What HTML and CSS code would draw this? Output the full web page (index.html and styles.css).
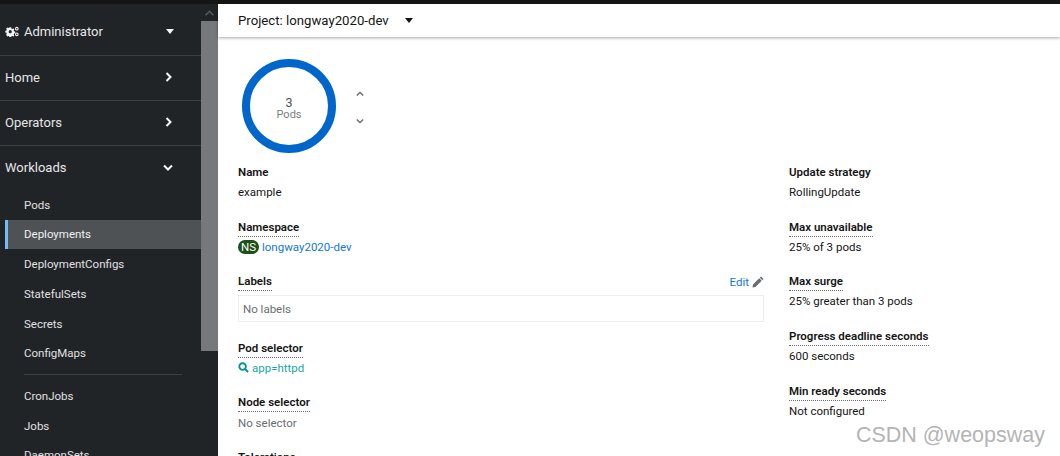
FILE: index.html
```html
<!DOCTYPE html>
<html lang="en">
<head>
<meta charset="utf-8">
<title>Deployment example</title>
<link rel="stylesheet" href="styles.css">
</head>
<body>
<div class="topline"></div>
<div class="app">
  <nav class="sidebar">
    <div class="nav-scroll">
      <div class="perspective">
        <svg class="cogs" viewBox="0 0 16 12" width="14" height="11"><path fill="#f0f0f0" d="M5 1.200h2l.3 1.300 1 .5 1.200-.6 1.200 1.300-.7 1.100.4 1 1.300.4v1.800l-1.300.3-.4 1 .7 1.200-1.200 1.200-1.200-.6-1 .4-.3 1.300H5l-.3-1.300-1-.4-1.200.6L1.300 9.600l.7-1.200-.4-1L.3 7.100V5.300l1.300-.4.4-1-.7-1.100 1.200-1.300 1.200.6 1-.5zM6 4.400a1.800 1.800 0 1 0 0 3.600 1.800 1.800 0 0 0 0-3.600z"/><circle cx="13.500" cy="2.800" r="1.500" fill="none" stroke="#f0f0f0" stroke-width="1.200"/><circle cx="13.500" cy="9.200" r="1.500" fill="none" stroke="#f0f0f0" stroke-width="1.200"/></svg>
        <span class="perspective-label">Administrator</span>
        <svg class="caret light" viewBox="0 0 8 5" width="8" height="5"><path d="M0 0h8L4 5z"/></svg>
      </div>
      <div class="section">
        <span>Home</span>
        <svg class="chev" viewBox="0 0 7 10" width="7" height="10"><path d="M1.500 1l4 4-4 4" fill="none" stroke="#f5f5f5" stroke-width="2"/></svg>
      </div>
      <div class="section">
        <span>Operators</span>
        <svg class="chev" viewBox="0 0 7 10" width="7" height="10"><path d="M1.500 1l4 4-4 4" fill="none" stroke="#f5f5f5" stroke-width="2"/></svg>
      </div>
      <div class="section open">
        <span>Workloads</span>
        <svg class="chev down" viewBox="0 0 10 7" width="10" height="7"><path d="M1 1.500l4 4 4-4" fill="none" stroke="#f5f5f5" stroke-width="2"/></svg>
      </div>
      <ul class="subnav">
        <li>Pods</li>
        <li class="active">Deployments</li>
        <li>DeploymentConfigs</li>
        <li>StatefulSets</li>
        <li>Secrets</li>
        <li>ConfigMaps</li>
        <li class="sep" aria-hidden="true"></li>
        <li>CronJobs</li>
        <li>Jobs</li>
        <li>DaemonSets</li>
      </ul>
    </div>
    <div class="scrollbar">
      <div class="scroll-btn"><svg viewBox="0 0 10 6" width="9" height="6"><path d="M5 0l5 5-1.200 1L5 2.400 1.200 6 0 5z" fill="#55585b"/></svg></div>
      <div class="scroll-thumb"></div>
    </div>
  </nav>
  <main class="main">
    <header class="projectbar">
      <span>Project: longway2020-dev</span>
      <svg class="caret" viewBox="0 0 8 5" width="8" height="5"><path d="M0 0h8L4 5z"/></svg>
    </header>
    <div class="content">
      <div class="pods">
        <div class="ring">
          <span class="ring-num">3</span>
          <span class="ring-label">Pods</span>
        </div>
        <div class="spin">
          <svg viewBox="0 0 10 7" width="8" height="6"><path d="M1 5.500l4-4 4 4" fill="none" stroke="#6a6e73" stroke-width="1.800"/></svg>
          <svg viewBox="0 0 10 7" width="8" height="6"><path d="M1 1.500l4 4 4-4" fill="none" stroke="#6a6e73" stroke-width="1.800"/></svg>
        </div>
      </div>
      <div class="columns">
        <div class="col-left">
          <div class="field">
            <div class="term">Name</div>
            <div class="desc">example</div>
          </div>
          <div class="field">
            <div class="term"><span class="dotted">Namespace</span></div>
            <div class="desc ns"><span class="badge">NS</span><a class="link">longway2020-dev</a></div>
          </div>
          <div class="field labels">
            <div class="term split">
              <span class="dotted">Labels</span>
              <span class="edit"><a class="link">Edit</a>
                <svg viewBox="0 0 12 12" width="12" height="12"><path fill="#6a6e73" d="M9 .5l2.500 2.500-1.200 1.200-2.500-2.500zM7.200 2.300l2.500 2.500L3.500 11 .5 11.500 1 8.500z"/></svg>
              </span>
            </div>
            <div class="labelbox">No labels</div>
          </div>
          <div class="field">
            <div class="term"><span class="dotted">Pod selector</span></div>
            <div class="desc selector">
              <svg viewBox="0 0 12 12" width="11" height="11"><circle cx="5" cy="5" r="3.600" fill="none" stroke="#009596" stroke-width="2"/><path d="M7.700 7.700l3.300 3.300" stroke="#009596" stroke-width="2.200"/></svg>
              <span>app=httpd</span>
            </div>
          </div>
          <div class="field">
            <div class="term"><span class="dotted">Node selector</span></div>
            <div class="desc muted">No selector</div>
          </div>
          <div class="field">
            <div class="term">Tolerations</div>
          </div>
        </div>
        <div class="col-right">
          <div class="field">
            <div class="term">Update strategy</div>
            <div class="desc">RollingUpdate</div>
          </div>
          <div class="field">
            <div class="term"><span class="dotted">Max unavailable</span></div>
            <div class="desc">25% of 3 pods</div>
          </div>
          <div class="field">
            <div class="term"><span class="dotted">Max surge</span></div>
            <div class="desc">25% greater than 3 pods</div>
          </div>
          <div class="field">
            <div class="term"><span class="dotted">Progress deadline seconds</span></div>
            <div class="desc">600 seconds</div>
          </div>
          <div class="field">
            <div class="term"><span class="dotted">Min ready seconds</span></div>
            <div class="desc">Not configured</div>
          </div>
        </div>
      </div>
    </div>
  </main>
</div>
<div class="watermark">CSDN @weopsway</div>
</body>
</html>
```
FILE: styles.css
```css
* { box-sizing: border-box; }
html, body { margin: 0; height: 100%; overflow: hidden; }
body {
  font-family: Roboto, "Noto Sans", sans-serif;
  font-size: 12px;
  color: #151515;
  background: #fff;
  display: flex;
  flex-direction: column;
}
.topline { height: 4px; background: #151515; flex: none; }
.app { flex: 1; display: flex; min-height: 0; }

.sidebar { width: 218px; flex: none; display: flex; background: #212427; overflow: hidden; }
.nav-scroll { width: 201px; flex: none; }
.scrollbar { width: 17px; flex: none; display: flex; flex-direction: column; }
.scroll-btn { height: 17px; display: flex; align-items: center; justify-content: center; }
.scroll-thumb { height: 330px; background: #77787b; }

.perspective {
  height: 52px;
  display: flex;
  align-items: center;
  padding: 4px 0 0 5px;
  color: #e6e6e6;
  font-size: 13px;
  border-bottom: 1px solid #3c3f42;
}
.perspective-label { margin-left: 5px; }
.perspective .caret { margin-left: auto; margin-right: 27px; }
.cogs { flex: none; }
.caret { flex: none; fill: #151515; }
.caret.light { fill: #f5f5f5; }

.section {
  height: 45px;
  display: flex;
  align-items: center;
  justify-content: space-between;
  padding: 0 29px 2px 5px;
  color: #e6e6e6;
  font-size: 13px;
  border-bottom: 1px solid #3c3f42;
}
.section.open { border-bottom: 0; padding: 0 28px 0 5px; height: 42px; }

.subnav { list-style: none; margin: 0; padding: 0 0 0 5px; font-size: 11.500px; color: #e0e0e0; }
.subnav li { height: 29.700px; display: flex; align-items: center; padding-left: 19px; }
.subnav li:first-child { margin-top: 2px; }
.subnav .active { background: #4f5255; border-left: 3px solid #73bcf7; padding: 0 0 2px 16px; color: #f0f0f0; }
.subnav .sep { height: 1px; margin: 6px 19px 6px 19px; padding: 0; background: #3c3f42; }

.main { flex: 1; min-width: 0; display: flex; flex-direction: column; }
.projectbar {
  height: 33px;
  flex: none;
  display: flex;
  align-items: center;
  gap: 16px;
  padding-left: 20px;
  font-size: 13.200px;
  box-shadow: 0 1px 3px rgba(0, 0, 0, .35);
}
.content { padding: 22px 0 0 20px; }

.pods { display: flex; align-items: center; gap: 20px; margin-left: 4px; }
.ring {
  width: 94px;
  height: 94px;
  border: 8px solid #06c;
  border-radius: 50%;
  display: flex;
  flex-direction: column;
  align-items: center;
  justify-content: center;
  line-height: 12px;
  padding-top: 5px;
  color: #7a7d80;
}
.ring-num { font-size: 12.500px; color: #4f5255; }
.ring-label { font-size: 11px; }
.spin { display: flex; flex-direction: column; gap: 21px; margin-top: 2px; }
.spin svg { display: block; }

.columns { display: flex; margin-top: 11px; }
.col-left { width: 526px; flex: none; }
.col-right { margin-left: 25px; }

.field { margin-bottom: 20px; height: 34.700px; }
.field.labels { height: 66.200px; margin-bottom: 0; }
.term { font-weight: 600; font-size: 11.500px; line-height: 16px; height: 16px; }
.term.split { display: flex; justify-content: space-between; align-items: flex-start; padding-top: 1px; }
.dotted { border-bottom: 1px dotted #6a6e73; display: inline-block; line-height: 15px; height: 17px; }
.desc { font-size: 11.500px; line-height: 16px; margin-top: 4px; }
.link { color: #1277d8; }
.ns { display: flex; align-items: center; gap: 3px; }
.badge {
  background: #1e4f18;
  color: #fff;
  border-radius: 9px;
  width: 21px;
  height: 14px;
  font-size: 11.500px;
  line-height: 14px;
  text-align: center;
  flex: none;
}
.edit { display: flex; align-items: center; gap: 3px; font-weight: 400; }
.labelbox {
  margin-top: 6px;
  height: 27px;
  border: 1px solid #ededed;
  padding-left: 4px;
  display: flex;
  align-items: center;
  color: #6a6e73;
  font-size: 11.500px;
}
.selector { display: flex; align-items: center; gap: 3px; color: #1aa5a6; }
.desc.muted { color: #6a6e73; margin-top: 5px; }

.watermark {
  position: absolute;
  right: 15px;
  bottom: 8px;
  font-family: "Liberation Sans", Arial, sans-serif;
  font-size: 21.500px;
  color: #b4b4b4;
}
```
